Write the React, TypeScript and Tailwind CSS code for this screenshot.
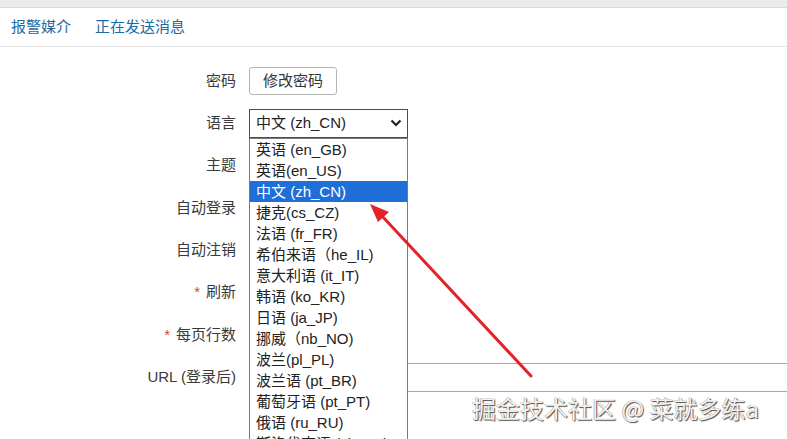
import React from "react";

const languages = [
  "英语 (en_GB)",
  "英语(en_US)",
  "中文 (zh_CN)",
  "捷克(cs_CZ)",
  "法语 (fr_FR)",
  "希伯来语（he_IL)",
  "意大利语 (it_IT)",
  "韩语 (ko_KR)",
  "日语 (ja_JP)",
  "挪威（nb_NO)",
  "波兰(pl_PL)",
  "波兰语 (pt_BR)",
  "葡萄牙语 (pt_PT)",
  "俄语 (ru_RU)",
  "斯洛伐克语 (sk_SK)",
];

const rows = [
  { label: "密码" },
  { label: "语言" },
  { label: "主题" },
  { label: "自动登录" },
  { label: "自动注销" },
  { label: "刷新", required: true },
  { label: "每页行数", required: true },
  { label: "URL (登录后)" },
];

const font = "font-['Liberation_Sans','Noto_Sans_CJK_SC',sans-serif]";

function Control({ index }: { index: number }) {
  if (index === 0) {
    return (
      <button className="h-[28px] px-[13px] border border-[#b5b5b5] rounded-[3px] bg-white text-[15px] text-[#333]">
        修改密码
      </button>
    );
  }
  if (index === 1) {
    return (
      <div className="relative">
        <div className="w-[159px] h-[29px] border border-[#1f5a7e] flex items-center justify-between pl-[6px] pr-[5px] text-[15px] text-[#222] bg-white">
          <span>中文 (zh_CN)</span>
          <svg width="12" height="8" viewBox="0 0 12 8">
            <path d="M1.5 1.5 L6 6 L10.5 1.5" fill="none" stroke="#222" strokeWidth="2.2" />
          </svg>
        </div>
        {/* open native list */}
        <div className="absolute left-0 top-[29px] w-[159px] border border-[#7a7a7a] bg-white z-10 h-[320px] overflow-hidden">
          {languages.map((l, i) => (
            <div
              key={l}
              className={`h-[21px] leading-[21px] pl-[6px] text-[15px] whitespace-nowrap ${
                i === 2 ? "bg-[#1f6fd8] text-white" : "text-[#222]"
              }`}
            >
              {l}
            </div>
          ))}
        </div>
      </div>
    );
  }
  if (index === 7) {
    return <div className="w-[560px] h-[29px] border border-[#a8a8a8] bg-white" />;
  }
  return null;
}

export default function App() {
  return (
    <div className={`relative w-[787px] h-[439px] overflow-hidden bg-white ${font}`}>
      <div className="h-[8px] bg-[#ebebeb] border-b border-[#dadada]" />
      <div className="h-[39px] flex items-center gap-[24px] pl-[11px] border-b border-[#e6e6e6] text-[15px] text-[#1a6aa6]">
        <span>报警媒介</span>
        <span>正在发送消息</span>
      </div>

      <div className="pt-[13px]">
        {rows.map((r, i) => (
          <div key={r.label} className="h-[42.3px] flex items-center">
            <div className="w-[236px] shrink-0 text-right text-[15px] text-[#3a3a3a] whitespace-nowrap">
              {r.required && <span className="text-[#d64545] mr-[6px]">*</span>}
              {r.label}
            </div>
            <div className="ml-[13px] shrink-0">
              <Control index={i} />
            </div>
          </div>
        ))}
      </div>

      {/* annotation arrow */}
      <svg className="absolute left-0 top-0 pointer-events-none z-20" width="787" height="439">
        <line x1="531" y1="376" x2="382" y2="216" stroke="#e2232a" strokeWidth="3" strokeLinecap="round" />
        <polygon points="370,204 389,212 378,222" fill="#e2232a" />
      </svg>

      {/* watermark */}
      <div className="absolute left-[472px] top-[393px] z-30 text-[24px] leading-[30px] text-[#f2f2f2] whitespace-nowrap font-['Noto_Sans_CJK_SC',sans-serif] [text-shadow:1px_1px_1px_#4a4a4a,-0.5px_-0.5px_0_#9a9a9a]">
        掘金技术社区 @ 菜就多练a
      </div>
    </div>
  );
}
